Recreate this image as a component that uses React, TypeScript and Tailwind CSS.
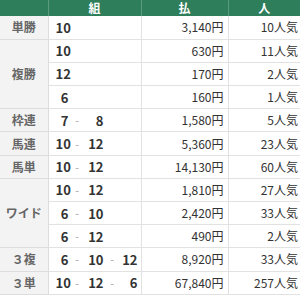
type Row = {
  label?: string;
  span?: number;
  combo: string[];
  pay: string;
  ninki: string;
};

const rows: Row[] = [
  { label: "単勝", span: 1, combo: ["10"], pay: "3,140円", ninki: "10人気" },
  { label: "複勝", span: 3, combo: ["10"], pay: "630円", ninki: "11人気" },
  { combo: ["12"], pay: "170円", ninki: "2人気" },
  { combo: ["6"], pay: "160円", ninki: "1人気" },
  { label: "枠連", span: 1, combo: ["7", "8"], pay: "1,580円", ninki: "5人気" },
  { label: "馬連", span: 1, combo: ["10", "12"], pay: "5,360円", ninki: "23人気" },
  { label: "馬単", span: 1, combo: ["10", "12"], pay: "14,130円", ninki: "60人気" },
  { label: "ワイド", span: 3, combo: ["10", "12"], pay: "1,810円", ninki: "27人気" },
  { combo: ["6", "10"], pay: "2,420円", ninki: "33人気" },
  { combo: ["6", "12"], pay: "490円", ninki: "2人気" },
  { label: "３複", span: 1, combo: ["6", "10", "12"], pay: "8,920円", ninki: "33人気" },
  { label: "３単", span: 1, combo: ["10", "12", "6"], pay: "67,840円", ninki: "257人気" },
];

function Combo({ nums }: { nums: string[] }) {
  const widths = ["w-[13px]", "w-[18px]", "w-[17px]"];
  return (
    <div className="flex items-center pl-[7px]">
      {nums.map((n, i) => (
        <div key={i} className="flex items-center">
          {i > 0 && (
            <span className="w-[17px] text-center text-[10px] text-[#b5b5b5]">-</span>
          )}
          <span className={`${widths[i]} text-right`}>{n}</span>
        </div>
      ))}
    </div>
  );
}

export default function App() {
  return (
    <div className="w-[300px] h-[296px] overflow-hidden bg-white font-['Noto_Sans_CJK_JP','Noto_Sans',sans-serif]">
      <table className="w-[300px] border-collapse table-fixed">
        <colgroup>
          <col className="w-[48px]" />
          <col className="w-[93px]" />
          <col className="w-[87px]" />
          <col className="w-[72px]" />
        </colgroup>
        <thead>
          <tr className="h-[16px] bg-[#2e7d5b] text-white text-[12px] font-bold leading-none">
            <th className="border-r border-[#5c9c7e]"></th>
            <th className="border-r border-[#5c9c7e]">組</th>
            <th className="border-r border-[#5c9c7e]">払</th>
            <th>人</th>
          </tr>
        </thead>
        <tbody>
          {rows.map((r, i) => (
            <tr key={i} className="h-[23.2px] leading-none">
              {r.label && (
                <td
                  rowSpan={r.span}
                  className="bg-[#f3f3f3] border-b border-r border-[#dddddd] text-center text-[12px] font-bold text-[#666666]"
                >
                  {r.label}
                </td>
              )}
              <td className="border-b border-r border-[#e2e2e2] text-[13px] font-bold text-[#333333]">
                <Combo nums={r.combo} />
              </td>
              <td className="border-b border-r border-[#e2e2e2] text-right pr-[4px] text-[12px] text-[#333333]">
                {r.pay}
              </td>
              <td className="border-b border-[#e2e2e2] text-right pr-[2px] text-[12px] text-[#333333]">
                {r.ninki}
              </td>
            </tr>
          ))}
        </tbody>
      </table>
    </div>
  );
}
